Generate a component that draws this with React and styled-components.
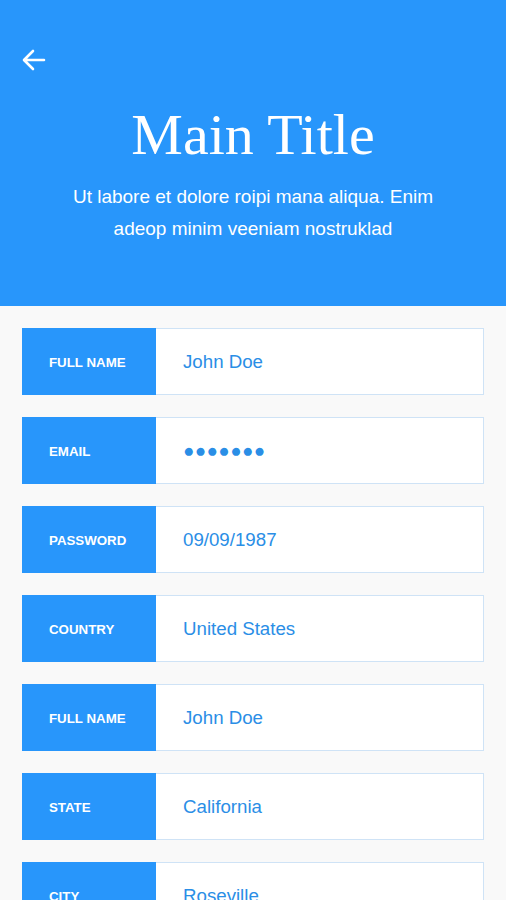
import React from "react";
import styled, { createGlobalStyle } from "styled-components";

const GlobalStyle = createGlobalStyle`
  html, body {
    margin: 0;
    padding: 0;
    background: #f9f9f9;
  }
  * {
    box-sizing: border-box;
  }
`;

const Page = styled.div`
  width: 506px;
  min-height: 900px;
  background: #f9f9f9;
  font-family: "Liberation Sans", Arial, sans-serif;
`;

const Header = styled.header`
  background: #2896fb;
  height: 306px;
  padding: 49px 22px 0;
  color: #fff;
`;

const BackButton = styled.button`
  display: block;
  background: none;
  border: none;
  padding: 0;
  width: 24px;
  height: 22px;
  cursor: pointer;
`;

const Title = styled.h1`
  margin: 32px 0 0;
  font-family: "Liberation Serif", "Times New Roman", serif;
  font-weight: 400;
  font-size: 58px;
  line-height: 64px;
  text-align: center;
`;

const Subtitle = styled.p`
  margin: 14px auto 0;
  width: 400px;
  font-size: 19px;
  line-height: 32px;
  text-align: center;
`;

const Form = styled.div`
  display: flex;
  flex-direction: column;
  gap: 22px;
  padding: 22px 22px 0;
`;

const Row = styled.div`
  display: flex;
  height: 67px;
`;

const Label = styled.div`
  width: 134px;
  flex-shrink: 0;
  background: #2896fb;
  color: #fff;
  font-size: 13.3px;
  font-weight: 700;
  display: flex;
  align-items: center;
  padding: 1px 0 0 27px;
`;

const Value = styled.div`
  flex: 1;
  background: #fff;
  border: 1px solid #cfe3f6;
  border-left: none;
  color: #2a8ee6;
  font-size: 18.7px;
  display: flex;
  align-items: center;
  padding: 1px 0 0 27px;
  letter-spacing: ${({ secret }) => (secret ? "0.5px" : "0")};
`;

const fields = [
  ["FULL NAME", "John Doe"],
  ["EMAIL", "\u25CF\u25CF\u25CF\u25CF\u25CF\u25CF\u25CF", true],
  ["PASSWORD", "09/09/1987"],
  ["COUNTRY", "United States"],
  ["FULL NAME", "John Doe"],
  ["STATE", "California"],
  ["CITY", "Roseville"],
];

function BackArrow() {
  return (
    <svg width="24" height="22" viewBox="0 0 24 22" fill="none">
      <path
        d="M22 11H2.5M11 2L2 11l9 9"
        stroke="#fff"
        strokeWidth="2.6"
        strokeLinecap="round"
        strokeLinejoin="round"
      />
    </svg>
  );
}

export default function App() {
  return (
    <Page>
      <GlobalStyle />
      <Header>
        <BackButton aria-label="Back">
          <BackArrow />
        </BackButton>
        <Title>Main Title</Title>
        <Subtitle>
          Ut labore et dolore roipi mana aliqua. Enim adeop minim veeniam
          nostruklad
        </Subtitle>
      </Header>
      <Form>
        {fields.map(([label, value, secret], i) => (
          <Row key={i}>
            <Label>{label}</Label>
            <Value secret={secret}>{value}</Value>
          </Row>
        ))}
      </Form>
    </Page>
  );
}
